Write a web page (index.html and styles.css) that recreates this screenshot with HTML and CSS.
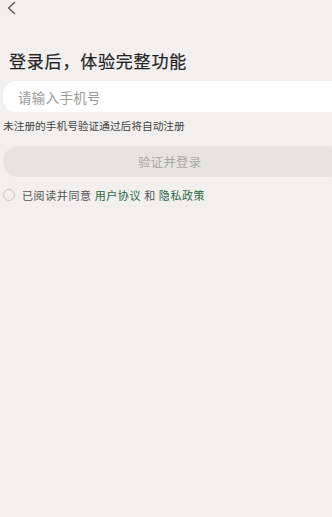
FILE: index.html
```html
<!DOCTYPE html>
<html lang="zh-CN">
<head>
    <meta charset="UTF-8">
    <meta name="viewport" content="width=device-width, initial-scale=1.0">
    <title>登录</title>
    <link rel="stylesheet" href="styles.css">
</head>
<body>
    <div class="top-bar">
        <svg class="back-icon" width="12" height="16" viewBox="0 0 12 16">
            <path d="M9 2 L2.5 8 L9 14" fill="none" stroke="#555" stroke-width="1.3"/>
        </svg>
    </div>
    <div class="page">
        <h1 class="title">登录后，体验完整功能</h1>
        <div class="phone-box">
            <input type="tel" placeholder="请输入手机号">
        </div>
        <p class="hint">未注册的手机号验证通过后将自动注册</p>
        <button class="login-btn" disabled>验证并登录</button>
        <div class="agree">
            <span class="radio"></span>
            <span>已阅读并同意 <a>用户协议</a> 和 <a>隐私政策</a></span>
        </div>
    </div>
</body>
</html>
```

FILE: styles.css
```css
body {
    margin: 0;
    padding: 0;
    background: #f1f0ee;
    font-family: "Noto Sans CJK SC", "Noto Sans", sans-serif;
    color: #222;
    height: 517px;
    overflow: hidden;
}

.top-bar {
    height: 16px;
    padding: 0 0 0 6px;
}

.back-icon {
    display: block;
}

.page {
    padding: 0 0 0 3px;
}

/* heading */
.title {
    margin: 33px 0 0 6px;
    font-size: 17px;
    font-weight: 400;
    -webkit-text-stroke: 0.2px #222;
    letter-spacing: 0.8px;
    line-height: 24px;
}

/* phone input */
.phone-box {
    margin-top: 8px;
    height: 31px;
    background: #fff;
    border-radius: 13px;
    width: 340px;
    display: flex;
    align-items: center;
}

.phone-box input {
    border: none;
    outline: none;
    background: transparent;
    padding: 0 0 0 15px;
    font-family: inherit;
    font-size: 13.5px;
    letter-spacing: 0.3px;
    width: 100%;
}

.phone-box input::placeholder {
    color: #9a9a9a;
}

.hint {
    margin: 7px 0 0;
    font-size: 10.7px;
    line-height: 14px;
    color: #444;
}

/* login button */
.login-btn {
    display: block;
    margin-top: 13px;
    width: 340px;
    height: 31px;
    border: none;
    border-radius: 16px;
    background: #e5e4df;
    color: #aaa9a4;
    font-family: inherit;
    font-size: 12.4px;
    letter-spacing: 0.3px;
    padding: 0;
    text-align: left;
    text-indent: 135px;
}

.agree {
    margin-top: 10px;
    display: flex;
    align-items: center;
    font-size: 11px;
    color: #555;
    letter-spacing: 0.6px;
}

.radio {
    width: 10px;
    height: 10px;
    border: 1px solid #c8c7c3;
    border-radius: 50%;
    margin-right: 7px;
}

.agree a {
    color: #2c6a42;
}
```
